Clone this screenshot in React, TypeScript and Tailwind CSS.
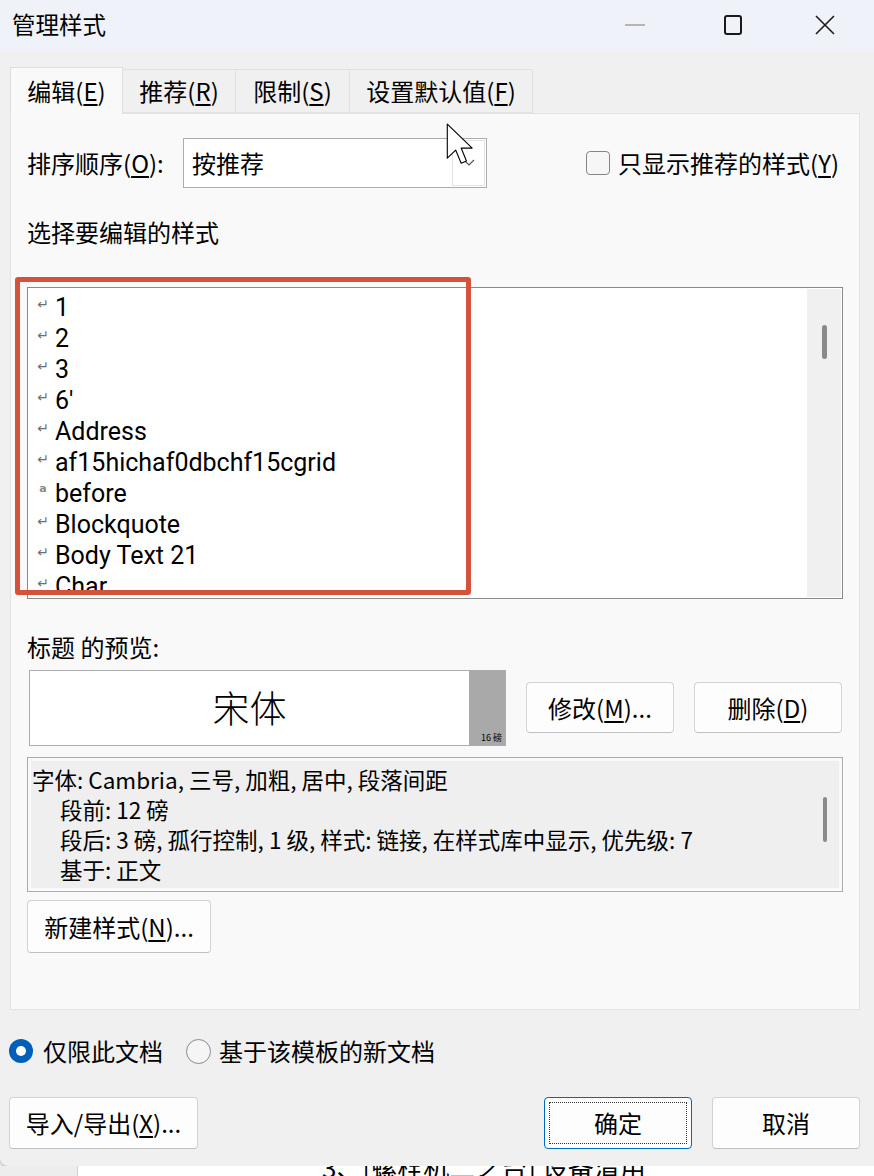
import React from "react";

const items: { s: string; t: string }[] = [
  { s: "↵", t: "1" },
  { s: "↵", t: "2" },
  { s: "↵", t: "3" },
  { s: "↵", t: "6'" },
  { s: "↵", t: "Address" },
  { s: "↵", t: "af15hichaf0dbchf15cgrid" },
  { s: "a", t: "before" },
  { s: "↵", t: "Blockquote" },
  { s: "↵", t: "Body Text 21" },
  { s: "↵", t: "Char" },
];

function Btn({ children, className }: { children: React.ReactNode; className: string }) {
  return (
    <div
      className={
        "flex items-center justify-center rounded-[4px] border border-[#d3d3d3] border-b-[#c0c0c0] bg-[#fdfdfd] text-[24px] text-black " +
        className
      }
    >
      {children}
    </div>
  );
}

export default function App() {
  return (
    <div className="relative h-[1176px] w-[874px] overflow-hidden bg-white font-['Noto_Sans_CJK_SC','Noto_Sans',sans-serif] text-black">
      {/* dialog */}
      <div className="relative h-[1166px] w-[874px] rounded-bl-[8px] bg-[#f0f0f0] shadow-[0_2px_4px_rgba(0,0,0,0.35)]">
        {/* title bar */}
        <div className="flex h-[50px] items-center bg-[#eff3f9] pl-[12px]">
          <span className="text-[23.5px] leading-none">管理样式</span>
          <div className="ml-auto flex items-center">
            <div className="flex h-[40px] w-[93px] items-center justify-center pr-[10px]">
              <div className="h-[2px] w-[20px] bg-[#b5b5b5]" />
            </div>
            <div className="flex h-[40px] w-[93px] items-center justify-center">
              <div className="h-[20px] w-[18px] rounded-[3px] border-[2px] border-[#1a1a1a]" />
            </div>
            <div className="flex h-[40px] w-[93px] items-center justify-center pr-[2px]">
              <svg width="20" height="20" viewBox="0 0 20 20">
                <path d="M1 1 L19 19 M19 1 L1 19" stroke="#1a1a1a" strokeWidth="1.6" fill="none" />
              </svg>
            </div>
            <div className="w-[2px]" />
          </div>
        </div>

        {/* body */}
        <div className="px-[10px] pt-[18px]">
          {/* tabs */}
          <div className="flex h-[45px] items-end text-[24px]">
            <div className="relative z-10 -mb-px flex h-[47px] w-[113px] items-center justify-center border border-b-0 border-[#dedede] bg-[#f9f9f9]">
              编辑(<span className="underline underline-offset-[3px]">E</span>)
            </div>
            <div className="flex h-[44px] w-[113px] items-center justify-center border-y border-r border-[#e2e2e2] bg-[#f0f0f0]">
              推荐(<span className="underline underline-offset-[3px]">R</span>)
            </div>
            <div className="flex h-[44px] w-[114px] items-center justify-center border-y border-r border-[#e2e2e2] bg-[#f0f0f0]">
              限制(<span className="underline underline-offset-[3px]">S</span>)
            </div>
            <div className="flex h-[44px] w-[183px] items-center justify-center border-y border-r border-[#e2e2e2] bg-[#f0f0f0]">
              设置默认值(<span className="underline underline-offset-[3px]">F</span>)
            </div>
          </div>

          {/* panel */}
          <div className="h-[897px] w-[850px] border border-[#e3e3e3] bg-[#f9f9f9] pl-[16px]">
            {/* sort row */}
            <div className="mt-[24px] flex h-[50px] items-center">
              <div className="w-[156px] text-[24px]">
                排序顺序(<span className="underline underline-offset-[3px]">O</span>):
              </div>
              <div className="flex h-[50px] w-[304px] border border-[#acacac] bg-white">
                <div className="flex flex-1 items-center pl-[8px] text-[24px]">按推荐</div>
                <div className="m-[1px] flex w-[33px] items-center justify-center border border-[#e3e3e3] bg-white">
                  <svg width="12" height="8" viewBox="0 0 12 8">
                    <path d="M1 1 L6 6 L11 1" stroke="#555" strokeWidth="1.2" fill="none" />
                  </svg>
                </div>
              </div>
              <div className="ml-auto flex items-center gap-[8px] pr-[20px] text-[24px]">
                <div className="h-[24px] w-[24px] rounded-[4px] border border-[#858585] bg-[#f6f6f6]" />
                <span>
                  只显示推荐的样式(<span className="underline underline-offset-[3px]">Y</span>)
                </span>
              </div>
            </div>

            <div className="mt-[32px] h-[24px] text-[24px] leading-[24px]">选择要编辑的样式</div>

            {/* list */}
            <div className="mt-[43px] flex h-[312px] w-[816px] border border-[#8a8a8a] bg-white">
              <div className="flex-1 overflow-hidden pt-[4px]">
                {items.map((it, i) => (
                  <div key={i} className="flex h-[31px] items-start">
                    <div className="flex h-[31px] w-[27px] justify-center pl-[3px] pt-[5px]">
                      {it.s === "a" ? (
                        <span className="block font-['DejaVu_Sans',sans-serif] text-[11px] font-bold leading-[11px] text-[#8a8a8a]">
                          a
                        </span>
                      ) : (
                        <span className="block font-['DejaVu_Sans',sans-serif] text-[14px] leading-[14px] text-[#6e6e6e]">
                          ↵
                        </span>
                      )}
                    </div>
                    <span className="block h-[31px] font-['Roboto','Noto_Sans_CJK_SC',sans-serif] text-[25px] leading-[31px]">
                      {it.t}
                    </span>
                  </div>
                ))}
              </div>
              <div className="my-[1px] mr-[1px] flex w-[34px] justify-center bg-[#f0f0f0] pt-[36px]">
                <div className="h-[34px] w-[5px] rounded-full bg-[#8a8a8a]" />
              </div>
            </div>

            <div className="mt-[36px] h-[24px] text-[24px] leading-[24px]">标题 的预览:</div>

            {/* preview row */}
            <div className="mt-[11px] flex h-[76px]">
              <div className="ml-[2px] flex h-[76px] w-[477px] border border-[#acacac] bg-white">
                <div className="flex flex-1 items-center justify-center text-[37px] font-light">宋体</div>
                <div className="flex w-[36px] items-end justify-end bg-[#a9a9a9] pb-[3px] pr-[3px] text-[9px] leading-none">
                  16 磅
                </div>
              </div>
              <Btn className="ml-[20px] mt-[12px] h-[51px] w-[148px]">
                <span>
                  修改(<span className="underline underline-offset-[3px]">M</span>)...
                </span>
              </Btn>
              <Btn className="ml-[20px] mt-[12px] h-[51px] w-[148px]">
                <span>
                  删除(<span className="underline underline-offset-[3px]">D</span>)
                </span>
              </Btn>
            </div>

            {/* description */}
            <div className="mt-[11px] flex h-[135px] w-[816px] border border-[#acacac] bg-[#f9f9f9] p-[3px]">
              <div className="flex-1 whitespace-nowrap bg-[#efefef] pl-[1px] pt-[3px] text-[22.5px] leading-[30px]">
                <div>字体: Cambria, 三号, 加粗, 居中, 段落间距</div>
                <div className="pl-[28px]">段前: 12 磅</div>
                <div className="pl-[28px]">段后: 3 磅, 孤行控制, 1 级, 样式: 链接, 在样式库中显示, 优先级: 7</div>
                <div className="pl-[28px]">基于: 正文</div>
              </div>
              <div className="flex w-[28px] justify-center bg-[#efefef] pt-[36px]">
                <div className="h-[45px] w-[4px] rounded-full bg-[#8a8a8a]" />
              </div>
            </div>

            <Btn className="mt-[8px] h-[53px] w-[184px]">
              <span>
                新建样式(<span className="underline underline-offset-[3px]">N</span>)...
              </span>
            </Btn>
          </div>
        </div>

        {/* radio row */}
        <div className="mt-[26px] flex h-[30px] items-center pl-[9px] text-[24px]">
          <div className="flex h-[24px] w-[24px] items-center justify-center rounded-full bg-[#005fb8]">
            <div className="h-[10px] w-[10px] rounded-full bg-white" />
          </div>
          <span className="ml-[10px]">仅限此文档</span>
          <div className="ml-[23px] h-[25px] w-[25px] rounded-full border-[1.5px] border-[#8a8a8a] bg-[#f5f5f5]" />
          <span className="ml-[8px]">基于该模板的新文档</span>
        </div>

        {/* bottom buttons */}
        <div className="mt-[31px] flex pl-[9px]">
          <Btn className="h-[52px] w-[189px]">
            <span>
              导入/导出(<span className="underline underline-offset-[3px]">X</span>)...
            </span>
          </Btn>
          <div className="ml-[346px] flex h-[52px] w-[148px] items-center justify-center rounded-[4px] border border-[#0067c0] bg-[#fdfdfd] p-[4px]">
            <div className="flex h-full w-full items-center justify-center border border-dotted border-[#333] text-[24px]">
              确定
            </div>
          </div>
          <Btn className="ml-[20px] h-[52px] w-[148px]">
            <span>取消</span>
          </Btn>
        </div>

        {/* cursor */}
        <svg
          className="absolute left-[446px] top-[123px]"
          width="29"
          height="44"
          viewBox="0 0 13 20"
        >
          <path
            d="M0.5 0.5 L0.5 16 L4.3 12.3 L6.8 18.3 L9.2 17.3 L6.8 11.4 L11.8 11.4 Z"
            fill="white"
            stroke="black"
            strokeWidth="0.5"
            strokeLinejoin="round"
          />
        </svg>

        {/* red annotation box */}
        <div className="absolute left-[15px] top-[277px] h-[318px] w-[456px] rounded-[3px] border-[5px] border-[#d4513a]" />
      </div>

      {/* background document strip */}
      <div className="absolute left-0 top-[1166px] flex h-[10px] w-[874px]">
        <div className="w-[78px] border-r border-[#d0d0d0] bg-[#ededed]" />
        <div className="relative flex-1 overflow-hidden bg-white">
          <div className="absolute left-[244px] top-[-14px] whitespace-nowrap text-[26px] leading-[30px]">
            3、[螺栓机二之台] 设备清用
          </div>
        </div>
      </div>
    </div>
  );
}
